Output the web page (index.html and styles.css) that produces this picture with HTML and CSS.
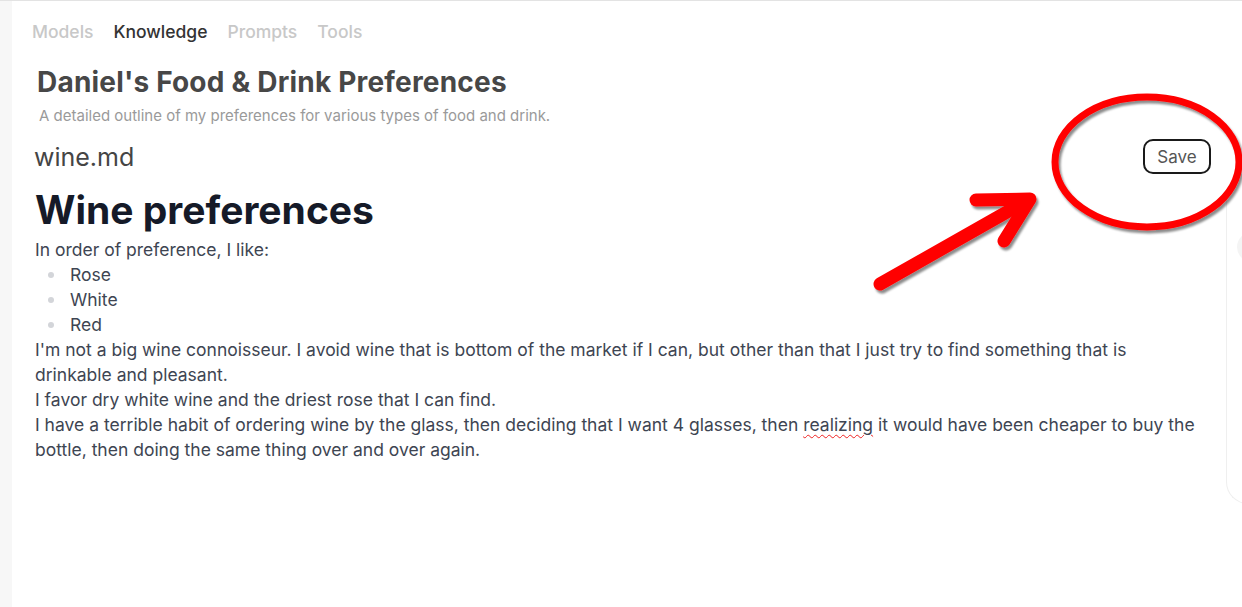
FILE: index.html
```html
<!DOCTYPE html>
<html lang="en">
<head>
<meta charset="utf-8">
<title>Knowledge</title>
<link rel="stylesheet" href="styles.css">
</head>
<body>
<div class="app">
  <aside class="sidebar"></aside>
  <main class="main">
    <nav class="tabs">
      <span class="tab">Models</span>
      <span class="tab active">Knowledge</span>
      <span class="tab">Prompts</span>
      <span class="tab">Tools</span>
    </nav>
    <header class="kb-head">
      <h1 class="kb-title">Daniel's Food &amp; Drink Preferences</h1>
      <p class="kb-desc">A detailed outline of my preferences for various types of food and drink.</p>
    </header>
    <div class="file-bar">
      <span class="file-name">wine.md</span>
      <button class="save-btn">Save</button>
    </div>
    <div class="work">
      <article class="doc">
        <h2 class="doc-h1">Wine preferences</h2>
        <p>In order of preference, I like:</p>
        <ul class="doc-list">
          <li>Rose</li>
          <li>White</li>
          <li>Red</li>
        </ul>
        <p>I'm not a big wine connoisseur. I avoid wine that is bottom of the market if I can, but other than that I just try to find something that is drinkable and pleasant.</p>
        <p>I favor dry white wine and the driest rose that I can find.</p>
        <p>I have a terrible habit of ordering wine by the glass, then deciding that I want 4 glasses, then <span class="misspell">realizing</span> it would have been cheaper to buy the bottle, then doing the same thing over and over again.</p>
      </article>
      <aside class="side-card">
        <div class="side-dot"></div>
      </aside>
    </div>
  </main>
</div>
<svg class="annot" width="1242" height="607" viewBox="0 0 1242 607" xmlns="http://www.w3.org/2000/svg">
  <defs>
    <filter id="sh" x="-20%" y="-20%" width="140%" height="140%">
      <feDropShadow dx="2" dy="3" stdDeviation="1.2" flood-color="#000" flood-opacity="0.45"/>
    </filter>
  </defs>
  <g filter="url(#sh)" fill="none" stroke="#ff0000" stroke-linecap="round" stroke-linejoin="round">
    <ellipse cx="1147" cy="162" rx="92" ry="65" stroke-width="7"/>
    <path d="M880 284 L1028 200" stroke-width="13"/>
    <path d="M976 200 L1030 199 L1004 241" stroke-width="13"/>
  </g>
</svg>
</body>
</html>
```
FILE: styles.css
```css
* { box-sizing: border-box; }
html, body { margin: 0; padding: 0; }
body {
  width: 1242px;
  height: 607px;
  overflow: hidden;
  background: #fff;
  font-family: Inter, "Noto Sans", sans-serif;
  position: relative;
}
.app {
  display: flex;
  height: 607px;
  border-top: 1px solid #e3e3e3;
}
.sidebar {
  width: 12px;
  flex-shrink: 0;
  background: #f7f7f7;
}
.main {
  flex: 1;
  min-width: 0;
  padding: 19px 0 0 20px;
  display: flex;
  flex-direction: column;
}
.tabs {
  display: flex;
  gap: 20px;
  font-size: 17.5px;
  line-height: 24px;
  font-weight: 500;
}
.tab { color: #c8c8c8; }
.tab.active { color: #333; }
.kb-head { padding-left: 5px; margin-top: 22px; }
.kb-title {
  margin: 0;
  font-size: 28px;
  line-height: 32px;
  font-weight: 700;
  color: #474747;
  letter-spacing: 0.2px;
}
.kb-desc {
  margin: 8px 0 0 2px;
  font-size: 15px;
  line-height: 20px;
  color: #9a9a9a;
}
.file-bar {
  display: flex;
  align-items: center;
  justify-content: space-between;
  margin-top: 13px;
  padding-left: 2px;
  padding-right: 31px;
}
.file-name {
  font-size: 25px;
  line-height: 32px;
  color: #454545;
}
.save-btn {
  font-family: Inter, "Noto Sans", sans-serif;
  font-size: 17px;
  line-height: 20px;
  color: #555;
  background: #fff;
  border: 2px solid #1a1a1a;
  border-radius: 10px;
  width: 68px;
  height: 35px;
  padding: 0;
}
.work {
  display: flex;
  flex: 1;
  min-height: 0;
  margin-right: -40px;
}
.doc {
  flex: 1;
  padding: 0 0 0 3px;
  color: #3e4552;
  font-size: 17.5px;
  line-height: 25px;
}
.doc p { margin: 0; }
.doc-h1 {
  margin: 12px 0 3px;
  font-size: 39px;
  line-height: 48px;
  font-weight: 700;
  color: #151a28;
}
.doc-list {
  margin: 0;
  padding-left: 35px;
  list-style: none;
}
.doc-list li { position: relative; }
.doc-list li::before {
  content: "";
  position: absolute;
  left: -22px;
  top: 10px;
  width: 6px;
  height: 6px;
  border-radius: 50%;
  background: #d3d5d9;
}
.misspell {
  text-decoration: underline wavy #e22;
  text-decoration-thickness: 1px;
  text-underline-offset: 3px;
}
.side-card {
  width: 56px;
  flex-shrink: 0;
  margin-left: 20px;
  margin-top: 18px;
  height: 312px;
  border: 1px solid #efefef;
  border-right: none;
  border-top: none;
  border-radius: 0 0 0 22px;
  padding: 40px 0 0 10px;
}
.side-dot {
  width: 30px;
  height: 30px;
  border-radius: 50%;
  background: #f4f4f4;
}
.annot {
  position: absolute;
  left: 0;
  top: 0;
  pointer-events: none;
}
```
